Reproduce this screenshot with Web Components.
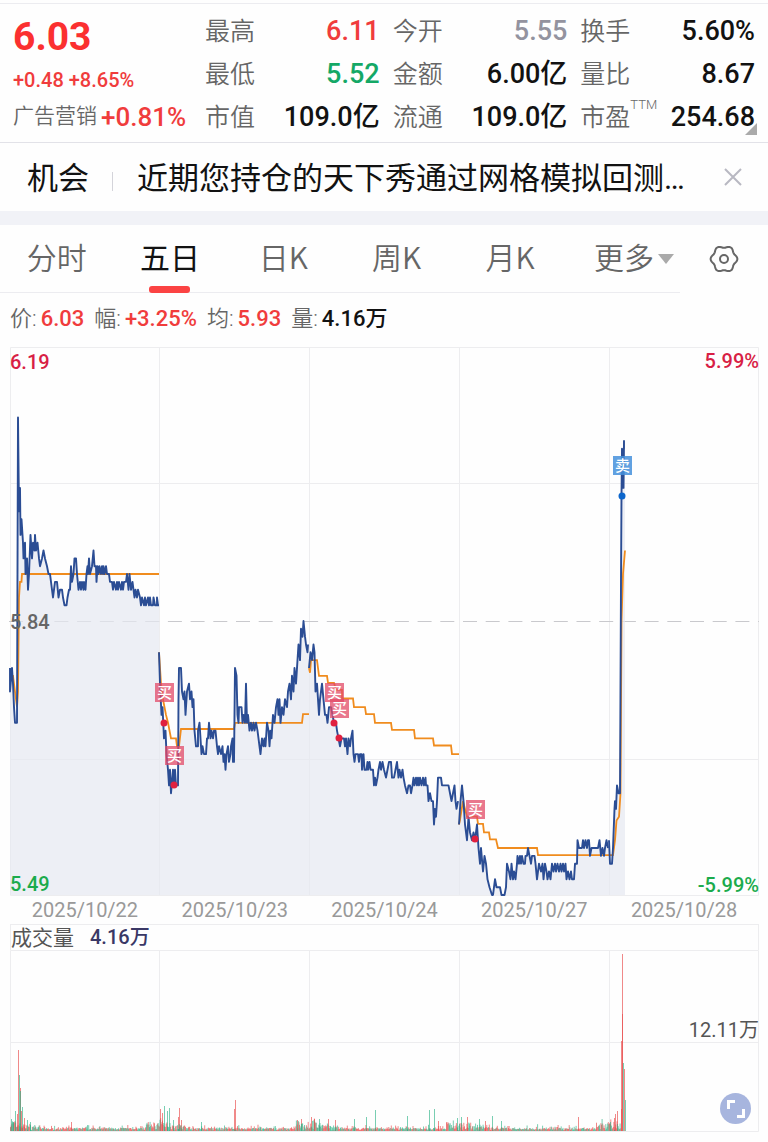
<!DOCTYPE html>
<html lang="zh-CN">
<head>
<meta charset="utf-8">
<meta name="viewport" content="width=device-width, initial-scale=1">
<title>行情</title>
<style>
  :root {
    --up: #f03c3c;
    --down: #14a866;
    --muted: #93939f;
    --ink: #121212;
    --label: #666;
    --line: #ececf0;
    --grid: #ededef;
  }

  body {
    margin: 0;
    background: #fefefe;
    color: var(--ink);
    font-family: Roboto, "Noto Sans CJK SC", sans-serif;
  }
</style>
</head>
<body>
<quote-header price="6.03" change="+0.48 +8.65%" sector="广告营销" sector-change="+0.81%">
  <quote-stat label="最高" value="6.11" tone="up"></quote-stat>
  <quote-stat label="今开" value="5.55" tone="muted"></quote-stat>
  <quote-stat label="换手" value="5.60%"></quote-stat>
  <quote-stat label="最低" value="5.52" tone="down"></quote-stat>
  <quote-stat label="金额" value="6.00亿"></quote-stat>
  <quote-stat label="量比" value="8.67"></quote-stat>
  <quote-stat label="市值" value="109.0亿"></quote-stat>
  <quote-stat label="流通" value="109.0亿"></quote-stat>
  <quote-stat label="市盈" note="TTM" value="254.68" more></quote-stat>
</quote-header>
<notice-bar kind="机会">近期您持仓的天下秀通过网格模拟回测…</notice-bar>
<period-tabs tabs="分时,五日,日K,周K,月K" active="五日"></period-tabs>
<main>
  <chart-legend>
    <legend-item label="价" value="6.03" tone="up"></legend-item>
    <legend-item label="幅" value="+3.25%" tone="up"></legend-item>
    <legend-item label="均" value="5.93" tone="up"></legend-item>
    <legend-item label="量" value="4.16万"></legend-item>
  </chart-legend>
  <price-chart></price-chart>
  <date-axis dates="2025/10/22,2025/10/23,2025/10/24,2025/10/27,2025/10/28"></date-axis>
  <volume-chart label="成交量" value="4.16万" middle="12.11万"></volume-chart>
</main>

<script>
const TONES = { up: "var(--up)", down: "var(--down)", muted: "var(--muted)" };
const tone = (name) => TONES[name] || "var(--ink)";

const WIDTH = 749;
const DAY = 150;

class BaseElement extends HTMLElement {
  constructor() {
    super();
    this.attachShadow({ mode: "open" });
  }

  connectedCallback() {
    this.shadowRoot.innerHTML = `<style>${this.constructor.styles}</style>${this.render()}`;
  }

  attr(name) {
    return this.getAttribute(name) || "";
  }
}

class QuoteHeader extends BaseElement {
  static get styles() {
    return /* css */`
      :host {
        display: grid;
        grid-template-columns: minmax(0, 179fr) minmax(0, 550fr);
        column-gap: 13px;
        margin-top: 3px;
        padding: 6px 13px 3px;
        border-top: 1px solid var(--line);
        border-bottom: 1px solid #e2e2e8;
        white-space: nowrap;
      }

      .main {
        display: grid;
        grid-template-rows: 54px 31px 44px;
        align-items: center;
        color: var(--up);
      }

      .price {
        color: #fb3030;
        font-size: 39px;
        font-weight: 700;
        line-height: 50px;
      }

      .change {
        font-size: 20px;
        font-weight: 500;
        line-height: 28px;
      }

      .sector {
        display: flex;
        align-items: center;
        gap: 4px;
        font-size: 26px;
        font-weight: 500;
        line-height: 43px;
      }

      .sector span {
        color: var(--label);
        font-size: 21px;
        font-weight: 350;
        line-height: 40px;
        padding-bottom: 3px;
      }

      .stats {
        display: grid;
        grid-template-columns: repeat(3, minmax(0, 1fr));
        grid-auto-rows: 43px;
        column-gap: 13px;
      }
    `;
  }

  render() {
    return /* html */`
      <div class="main">
        <div class="price">${this.attr("price")}</div>
        <div class="change">${this.attr("change")}</div>
        <div class="sector"><span>${this.attr("sector")}</span>${this.attr("sector-change")}</div>
      </div>
      <div class="stats"><slot></slot></div>`;
  }
}

class QuoteStat extends BaseElement {
  static get styles() {
    return /* css */`
      :host {
        display: flex;
        align-items: center;
        justify-content: space-between;
        position: relative;
        line-height: 43px;
      }

      .label {
        color: var(--label);
        font-size: 25px;
        font-weight: 350;
      }

      sup {
        font-size: 13px;
        line-height: 13px;
        vertical-align: 17px;
      }

      .value {
        font-size: 27px;
        font-weight: 500;
      }

      :host([more])::after {
        content: "";
        position: absolute;
        right: -2px;
        bottom: 4px;
        border: 6px solid transparent;
        border-right-color: #aaa;
        border-bottom-color: #aaa;
      }
    `;
  }

  render() {
    const note = this.attr("note");
    return /* html */`
      <span class="label">${this.attr("label")}${note && `<sup>${note}</sup>`}</span>
      <span class="value" style="color: ${tone(this.attr("tone"))}">${this.attr("value")}</span>`;
  }
}

class NoticeBar extends BaseElement {
  static get styles() {
    return /* css */`
      :host {
        display: flex;
        align-items: center;
        height: 68px;
        padding: 0 24px 0 27px;
        border-bottom: 14px solid #f1f2f7;
        font-size: 31px;
        white-space: nowrap;
      }

      .kind,
      .text {
        padding-bottom: 4px;
      }

      .kind {
        padding-right: 23px;
      }

      .text {
        flex: 1;
        min-width: 0;
        padding-left: 24px;
        overflow: hidden;
      }

      .rule {
        width: 1px;
        height: 19px;
        margin-top: 8px;
        background: #d4d4da;
      }

      button {
        display: flex;
        padding: 0;
        border: 0;
        background: none;
      }

      path {
        stroke: #b8b8c2;
        stroke-width: 2;
      }
    `;
  }

  render() {
    return /* html */`
      <span class="kind">${this.attr("kind")}</span>
      <span class="rule"></span>
      <span class="text"><slot></slot></span>
      <button type="button" aria-label="关闭">
        <svg width="22" height="22" viewBox="0 0 22 22"><path d="M3 3 19 19M19 3 3 19"/></svg>
      </button>`;
  }
}

class PeriodTabs extends BaseElement {
  static get styles() {
    return /* css */`
      :host {
        display: grid;
        grid-template-columns: minmax(0, 680fr) minmax(0, 88fr);
        height: 68px;
      }

      nav {
        display: grid;
        grid-template-columns: repeat(6, minmax(0, 1fr));
        border-bottom: 1px solid var(--line);
      }

      button {
        display: flex;
        align-items: center;
        justify-content: center;
        position: relative;
        padding: 0;
        border: 0;
        background: none;
        color: var(--label);
        font: 350 30px "Noto Sans CJK SC", sans-serif;
        white-space: nowrap;
      }

      nav button {
        padding-bottom: 6px;
      }

      button[aria-current] {
        color: var(--ink);
        font-weight: 400;
      }

      button[aria-current]::after {
        content: "";
        position: absolute;
        bottom: -1px;
        width: 41px;
        height: 7px;
        border-radius: 3px;
        background: #fb4343;
      }

      .more {
        gap: 4px;
        justify-content: flex-end;
        padding-right: 6px;
      }

      .more::after {
        content: "";
        margin-top: 6px;
        border: 8px solid transparent;
        border-top: 10px solid #aaa;
        border-bottom: 0;
      }

      svg {
        fill: none;
        stroke: #666;
        stroke-width: 2;
      }
    `;
  }

  // outline of the gear: a circle with six soft lobes
  gear() {
    const points = [];
    for (let a = 0; a < 360; a += 6) {
      const rad = a * Math.PI / 180;
      const r = 12.3 + 1.1 * Math.cos(6 * rad);
      points.push(`${(16 + r * Math.cos(rad)).toFixed(1)},${(16 + r * Math.sin(rad)).toFixed(1)}`);
    }
    return points.join(" ");
  }

  render() {
    const tabs = this.attr("tabs").split(",").map((name) => {
      const current = name === this.attr("active") ? `aria-current="true"` : "";
      return `<button type="button" ${current}>${name}</button>`;
    });
    return /* html */`
      <nav>${tabs.join("")}<button type="button" class="more">更多</button></nav>
      <button type="button" aria-label="设置">
        <svg width="32" height="32" viewBox="0 0 32 32">
          <polygon points="${this.gear()}" stroke-linejoin="round"/>
          <circle cx="16" cy="16" r="4"/>
        </svg>
      </button>`;
  }
}

class ChartLegend extends BaseElement {
  static get styles() {
    return /* css */`
      :host {
        display: flex;
        align-items: center;
        gap: 10px;
        box-sizing: border-box;
        height: 54px;
        padding: 0 10px 2px;
        font-size: 22px;
        line-height: 32px;
      }
    `;
  }

  render() {
    return `<slot></slot>`;
  }
}

class LegendItem extends BaseElement {
  static get styles() {
    return /* css */`
      :host {
        display: flex;
        align-items: baseline;
        gap: 4px;
        white-space: nowrap;
      }

      span {
        color: var(--label);
        font-weight: 350;
      }

      b {
        font-weight: 500;
      }
    `;
  }

  render() {
    return `<span>${this.attr("label")}:</span><b style="color: ${tone(this.attr("tone"))}">${this.attr("value")}</b>`;
  }
}

// Each day is "x,ticks" pairs, ticks of 0.01 counted down from the top price.
const TICK = 548 / 70;

const PRICE = [
  `0,41 0,44 2,41 3,43 4,46 5,48 7,48 8,9 9,21 10,18 10.5,24 11.5,22 13,25 13.5,27 15,25 15.5,29 17,27 18,31 19,29
   20.5,24 22,27 23,25 24.5,26 25,24 26,26 27.5,25 29,27 30,28 32,27 33.5,26 35,27 37,28 38.5,29 40,29 41,30 43,32 44,31 45,30
   47,30 48.5,32 50,31 52,31 53,32 54.5,33 56.5,33 57.5,32 59,31 60,31 61,28 62,30 63.5,29 64.5,27 66,27 67,29 68.5,31
   70,30 71,31 72,30 73.5,31 74,30 75.5,31 76.5,29 77.5,28 78,29 79,27 80,29 82,28 83.5,26 84.5,28 86,28 86.5,30 87.5,28 88.5,29
   89.5,28 91,29 92,28 93,29 93.5,28 94.5,29 96,28 97,29 99,29 100,30 102,30 103,31 104,30 106,31 107,30 108,31 109,30
   111,31 112,30 113,31 114,30 116,30 117,29 118.5,31 119.5,29 121,31 122.5,30 124.5,32 125.5,31 127,32 128,31 130,32
   131,33 132,32 134,33 135,32 136,33 138,32 139,33 140,32 141,33 143,33 143.5,32 145,33 147,33 147,32 148,33 149,33`,
  `149,39 150,43 151.5,47 152.5,46 154,50 155.5,49 156.5,52 158,54 159,56 160,54 161,57 163,54 164,56 165,54 166,56 168,56
   168.5,45 169,41 171,41 172,44 173.5,45 174.5,44 175.5,47 177,44 179,43 180,45 181.5,44 182.5,46 183.5,45 184.5,49 186,51
   188,51 188,49 189.5,48 191,51 191.5,52 192.5,51 194,52 196,52 197,50 198,50 199,48 200.5,50 201.5,49 203,50 204,49 205.5,49
   207,51 208,52 209,51 211,52 212.5,51 213.5,53 214.5,52 215.5,54 216.5,52 218,51 219,53 220.5,52 221,51 222.5,50 223,53 224,53
   225,41 226.5,42 227.5,47 228.5,48 229,46 231.5,46 232.5,48 233.5,47 235,48 236,43 237,48 238,47 239.5,49 241,48 242,49
   243.5,48 244.5,49 246,48 247.5,49 248.5,50 249.5,51 250.5,52 252,50 253.5,51 254.5,50 255.5,51 257,48 258.5,49 259.5,51
   260.5,49 261.5,50 263,47 264.5,48 266,46 267.5,45 268.5,47 269.5,45 270.5,48 272,46 273.5,47 275,45 277,46 278,44 279.5,43
   281,45 282,42 283.5,44 284.5,41 286,43 287.5,40 288.5,38 290,40 291,36 292.5,37 293.5,35 295,37 296,38 297.5,39 298,38`,
  `299,41 300.5,39 302,40 303.5,38 304.5,39 305.5,44 307,43 309,47 310,45 312,43 313.5,45 315,47 316.5,47 317.5,48 319,46 321,46
   322.5,47 324,48 326,48 327,49 328.5,50 330,51 331.5,50 334,50 335,51 336,50 337.5,52 338.5,50 340,51 341,50 342.5,49 343.5,52
   344.5,53 345.5,52 348,52 349,53 350,52 351.5,52 352,54 353.5,52 354.5,54 356.5,54 357.5,53 358,54 359.5,53 360.5,54
   363,54 364,56 365,55 366,56 367.5,55 368.5,54 370,53 371,54 372.5,53 374,54 376,55 377.5,54 379,53 381,53 382,55 384,55
   385.5,54 387,53 388.5,55 389.5,54 391,55 392.5,54 393.5,55 395,56 397,57 398.5,56 400,56 401,57 402.5,56 403.5,55 404.5,56
   406,55 407,56 408,55 409,56 410,55 411.5,56 413,55 414,56 415.5,55 416,56 417.5,56 418.5,58 420,57 421.5,58 423,58 424,61
   425,59 426,60 427,58 428,55 430,55 431,55 432,56 438.5,56 440,57 441.5,58 443,57 444.5,56 445.5,58 446.5,59 448,58`,
  `449,61 450.5,58 452,56 453.5,58 455,61 457,63 458.5,60 460,62 462,63 463.5,62 465,63 466,62 467,61 468.5,64 470,66 471,64
   473,67 474.5,65 476,66 477.5,68 479.5,69 482,70 483,70 484,69 485,68 486.5,69 490,69 491.5,70 494.5,70 496,69 497,66
   499,67 500.5,68 501.5,66 503,68 504,67 505.5,68 507,66 507.5,65 509,66 510,65 511,66 512,65 513.5,66 515,66 515.5,65 517,65
   518,64 519.5,65 521,66 522,65 524.5,65 525.5,66 527,68 529,66 531,67 532.5,66 533.5,68 535,66 536.5,67 537.5,68 539,67
   540.5,68 542,66 543.5,67 545,66 546,67 547.5,66 549,67 550.5,66 551.5,67 553,66 554,67 555.5,66 556.5,68 558,67 559.5,68
   561,67 562,68 564,68 565,66 567,66 567.5,63 569,64 572,64 573,63 574,64 575.5,63 577,64 578,63 579,63 580,65 581.5,64
   588,64 589.5,63 591,65 592.5,64 594,65 595,64 596.5,63 598,64`,
  `599,63 600,66 602,66 603,64 604.5,59 605,58 606,59 607,56 608.5,57 610,57 611,30 611.5,19 612,13 613,18 613.5,18 614,12 614,13`,
];

const AVERAGE = [
  `0,42 3,42 6,45 7,46 8,44 9,32 10,30 11.5,30 12,29 149,29`,
  `149,39 151,43 153,45 156,47 158,48 161,50 166,50 167,51 169,51 171,48.8 224,48.8 225,48 292,48 293,46.9 299,46.9`,
  `299,41 300,41.6 301,40 307,40 308,41 309,42 317,42 318,42.9 324,42.9 326,43.8 332,43.8 332,44.9 343,44.9 344,46 355,46
   356,46.9 364,46.9 365,48 381,48 382,48.9 404,48.9 405,50 423,50 424,50.9 441,50.9 442,52 449,52`,
  `449,61 450,60.4 453,58 455,59 457,60 467,60 468,60.9 473,60.9 474,62 479,62 480,62.9 486,62.9 488,64 527,64 528,64.9 598,64.9`,
  `598,64.9 603,64.9 605,63 606.5,60.5 609,60 610.5,57 611.5,35 613,29 615,26`,
];

const TRADES = [
  { kind: "买", x: 154, y: 345, dot: 376 },
  { kind: "买", x: 164, y: 408, dot: 438 },
  { kind: "买", x: 324, y: 345, dot: 376 },
  { kind: "买", x: 329, y: 361, dot: 391 },
  { kind: "买", x: 465, y: 462, dot: 492 },
  { kind: "卖", x: 612, y: 118, dot: 149 },
];

const toPoints = (text) => text.trim().split(/\s+/).map((pair) => {
  const [x, ticks] = pair.split(",").map(Number);
  return [x, Number((ticks * TICK).toFixed(1))];
});

class PriceChart extends BaseElement {
  static get styles() {
    return /* css */`
      :host {
        display: block;
        position: relative;
        margin: 0 9px 0 10px;
        font-size: 20px;
        font-weight: 500;
        line-height: 24px;
      }

      svg {
        display: block;
        width: 100%;
        overflow: visible;
      }

      .grid { stroke: var(--grid); stroke-width: 1; fill: none; }
      .middle { stroke: #c9c9cd; stroke-dasharray: 14 8.7; }
      .area { fill: #e6e8f1; fill-opacity: 0.7; }
      .average { stroke: #f08c1e; stroke-width: 1.8; fill: none; }
      .price { stroke: #2b4d94; stroke-width: 1.9; fill: none; stroke-linejoin: round; }
      .trade text { fill: white; font: 500 15px "Noto Sans CJK SC", sans-serif; text-anchor: middle; }
      .buy rect { fill: #e14a67; fill-opacity: 0.75; }
      .buy circle { fill: #e0203f; }
      .sell rect { fill: #4590dc; fill-opacity: 0.85; }
      .sell circle { fill: #0d66cc; }

      span { position: absolute; }
      .high { top: 3px; left: 0; color: #d81f45; }
      .high-rate { top: 2px; right: 0; color: #d81f45; }
      .base { top: 50%; left: 0; transform: translateY(-50%); color: #666; }
      .low { bottom: 0; left: 0; color: #1bab4c; }
      .low-rate { bottom: -1px; right: 0; color: #1bab4c; }
    `;
  }

  line(days, name) {
    return days.map((day) => `<polyline class="${name}" points="${toPoints(day).join(" ")}"/>`).join("");
  }

  area() {
    return PRICE.map((day, i) => {
      const points = toPoints(day);
      const end = i === 4 ? 615 : i * DAY + 149;
      return `<polygon class="area" points="${points[0][0]},548 ${points.join(" ")} ${end},${points.at(-1)[1]} ${end},548"/>`;
    }).join("");
  }

  trade({ kind, x, y, dot }) {
    return `<g class="trade ${kind === "买" ? "buy" : "sell"}">
      <rect x="${x - 9}" y="${y - 9}" width="19" height="19"/>
      <text x="${x + 0.5}" y="${y + 6}">${kind}</text>
      <circle cx="${x}" cy="${dot}" r="3.5"/>
    </g>`;
  }

  render() {
    return /* html */`
      <svg viewBox="0 0 ${WIDTH} 549">
        <path class="grid" d="M.5.5H748.5V548.5H.5ZM0 136.5H749M0 412.5H749M149.5 0V548M299.5 0V548M449.5 0V548M599.5 0V548"/>
        <path class="middle" d="M-1 274.5H749"/>
        ${this.area()}
        ${this.line(AVERAGE, "average")}
        ${this.line(PRICE, "price")}
        ${TRADES.map(this.trade).join("")}
      </svg>
      <span class="high">6.19</span>
      <span class="high-rate">5.99%</span>
      <span class="base">5.84</span>
      <span class="low">5.49</span>
      <span class="low-rate">-5.99%</span>`;
  }
}

class DateAxis extends BaseElement {
  static get styles() {
    return /* css */`
      :host {
        display: grid;
        grid-template-columns: repeat(5, minmax(0, 1fr));
        margin: 0 9px 0 10px;
        color: #999;
        font-size: 20px;
        line-height: 28px;
        text-align: center;
      }
    `;
  }

  render() {
    return this.attr("dates").split(",").map((date) => `<time>${date}</time>`).join("");
  }
}

// x, height and direction of the bars that stand out
const SPIKES = [
  [1, 12, 0], [3, 9, 0], [5, 20, 0], [7, 17, 1], [8, 81, 1], [9, 56, 0], [10, 43, 1], [10, 40, 0], [11, 20, 1], [12, 24, 0], [14, 13, 1], [17, 11, 0],
  [20, 9, 0], [61, 9, 1], [150, 22, 1], [152, 18, 1], [154, 25, 0], [157, 20, 0], [159, 23, 0], [163, 11, 0], [168, 14, 1],
  [169, 23, 1], [171, 11, 1], [191, 9, 0], [224, 22, 1], [225, 31, 1], [287, 11, 1], [291, 12, 1], [301, 14, 1], [304, 12, 1],
  [309, 12, 0], [318, 12, 1], [325, 11, 1], [344, 12, 0], [356, 14, 0], [365, 21, 0], [397, 15, 0], [419, 21, 0], [424, 22, 0],
  [428, 10, 1], [447, 13, 0], [451, 14, 0], [457, 14, 1], [469, 12, 0], [475, 10, 1], [482, 15, 0], [491, 10, 0], [568, 14, 1],
  [600, 9, 0], [604, 13, 1], [605, 17, 1], [607, 20, 1], [611, 22, 1], [611, 90, 1], [612, 177, 1], [612, 117, 1], [613, 68, 0], [614, 62, 1],
  [615, 31, 0],
];

class VolumeChart extends BaseElement {
  static get styles() {
    return /* css */`
      :host {
        display: block;
        position: relative;
        margin: 0 9px 0 10px;
        font-size: 21px;
      }

      header {
        display: flex;
        align-items: center;
        gap: 16px;
        box-sizing: border-box;
        height: 26px;
        padding-bottom: 4px;
        border: 1px solid var(--grid);
        border-bottom: 0;
        color: #3a3866;
        font-size: 20px;
        font-weight: 500;
      }

      header span {
        color: #555;
        font-size: 21px;
        font-weight: 400;
      }

      svg {
        display: block;
        width: 100%;
      }

      .grid { stroke: var(--grid); fill: none; }
      .rise { stroke: #e84a4a; stroke-opacity: 0.65; }
      .fall { stroke: #1fae7e; stroke-opacity: 0.6; }

      .middle {
        position: absolute;
        top: 92px;
        right: 0;
        color: #555;
        font-size: 20px;
        line-height: 28px;
      }

      button {
        position: absolute;
        right: 8px;
        bottom: 8px;
        width: 31px;
        height: 31px;
        padding: 0;
        border: 0;
        border-radius: 50%;
        background: #a7b5de;
      }

      button path {
        fill: none;
        stroke: white;
        stroke-width: 3;
      }
    `;
  }

  // quiet trading between the spikes, busier around each open
  bars() {
    const paths = ["", ""];
    let seed = 7;
    const next = () => (seed = seed * 16807 % 2147483647) / 2147483647;
    for (let x = 0; x < 611; x += 0.62) {
      const open = x % DAY;
      const busy = open < 30 ? 10 * Math.exp(-open / 15) : open > 136 ? 6 : 0;
      const h = 1 + next() * (busy + 2) + next() ** 6 * 4;
      paths[next() > 0.4 ? 1 : 0] += `M${x.toFixed(1)} 181v-${h.toFixed(1)}`;
    }
    for (const [x, h, rise] of SPIKES) {
      paths[rise] += `M${x + 0.5} 181v-${h}`;
    }
    return `<path class="rise" d="${paths[1]}"/><path class="fall" d="${paths[0]}"/>`;
  }

  render() {
    return /* html */`
      <header><span>${this.attr("label")}</span>${this.attr("value")}</header>
      <svg viewBox="0 0 ${WIDTH} 182">
        <path class="grid" d="M.5.5H748.5V181.5H.5ZM0 92.5H749M149.5 0V181M299.5 0V181M449.5 0V181M599.5 0V181"/>
        ${this.bars()}
      </svg>
      <span class="middle">${this.attr("middle")}</span>
      <button type="button" aria-label="全屏">
        <svg viewBox="0 0 31 31"><path d="M8.500 16V8.500H15M17 23.500H23.500V16"/></svg>
      </button>`;
  }
}

customElements.define("quote-header", QuoteHeader);
customElements.define("quote-stat", QuoteStat);
customElements.define("notice-bar", NoticeBar);
customElements.define("period-tabs", PeriodTabs);
customElements.define("chart-legend", ChartLegend);
customElements.define("legend-item", LegendItem);
customElements.define("price-chart", PriceChart);
customElements.define("date-axis", DateAxis);
customElements.define("volume-chart", VolumeChart);
</script>
</body>
</html>
